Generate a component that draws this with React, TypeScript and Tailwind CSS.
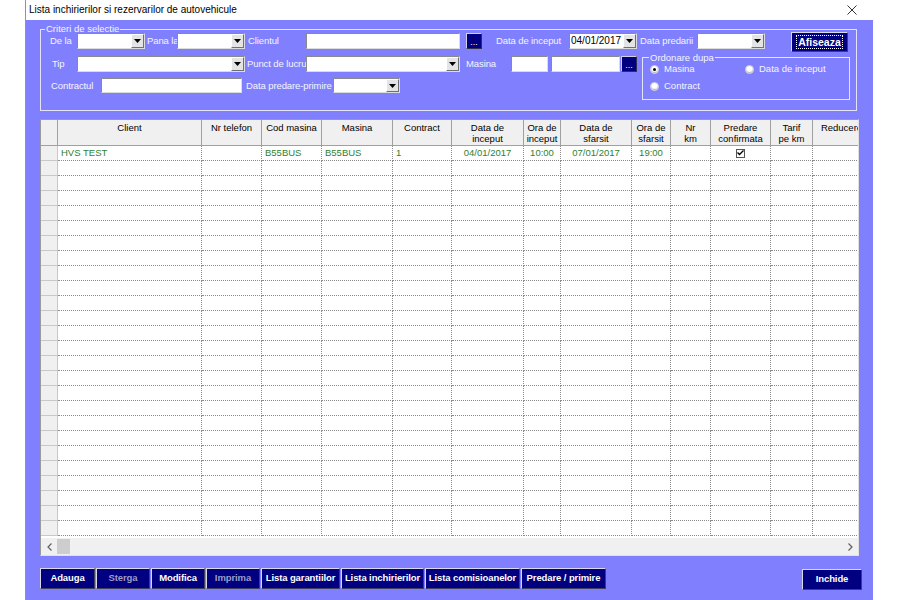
import React from "react";

// column layout of the rental grid
const columns = [
  { key: "client", label: "Client", w: "w-[144px]", align: "text-left" },
  { key: "tel", label: "Nr telefon", w: "w-[60px]", align: "text-left" },
  { key: "cod", label: "Cod masina", w: "w-[60px]", align: "text-left" },
  { key: "masina", label: "Masina", w: "w-[71px]", align: "text-left" },
  { key: "contract", label: "Contract", w: "w-[59px]", align: "text-left" },
  { key: "dataInc", label: "Data de\ninceput", w: "w-[72px]", align: "text-center" },
  { key: "oraInc", label: "Ora de\ninceput", w: "w-[37px]", align: "text-center" },
  { key: "dataSf", label: "Data de\nsfarsit", w: "w-[71px]", align: "text-center" },
  { key: "oraSf", label: "Ora de\nsfarsit", w: "w-[39px]", align: "text-center" },
  { key: "km", label: "Nr\nkm", w: "w-[40px]", align: "text-center" },
  { key: "predare", label: "Predare\nconfirmata", w: "w-[60px]", align: "text-center" },
  { key: "tarif", label: "Tarif\npe km", w: "w-[42px]", align: "text-center" },
  { key: "reducere", label: "Reducere", w: "w-[58px]", align: "text-center" },
];

const firstRow: Record<string, string> = {
  client: "HVS TEST",
  cod: "B55BUS",
  masina: "B55BUS",
  contract: "1",
  dataInc: "04/01/2017",
  oraInc: "10:00",
  dataSf: "07/01/2017",
  oraSf: "19:00",
};

const Label = ({ text, className }: { text: string; className: string }) => (
  <span
    className={`shrink-0 whitespace-nowrap text-[9.5px] leading-[16px] tracking-[-0.1px] text-[#f4f4ff] ${className}`}
  >
    {text}
  </span>
);

const TextBox = ({ className }: { className: string }) => (
  <div
    className={`h-full shrink-0 border border-t-[#8a8a8a] border-l-[#8a8a8a] border-r-[#dcdcdc] border-b-[#dcdcdc] bg-white ${className}`}
  />
);

const Combo = ({ className, value }: { className: string; value?: string }) => (
  <div
    className={`flex h-full shrink-0 border border-t-[#8a8a8a] border-l-[#8a8a8a] border-r-[#dcdcdc] border-b-[#dcdcdc] bg-white ${className}`}
  >
    <span className="flex-1 whitespace-nowrap pl-[1px] text-[10px] leading-[14px] text-black">{value}</span>
    <div className="flex w-[13px] items-center justify-center border border-t-white border-l-white border-r-[#707070] border-b-[#707070] bg-[#e4e4e4]">
      <svg width="7" height="4" viewBox="0 0 7 4">
        <path d="M0 0H7L3.5 4Z" fill="#000" />
      </svg>
    </div>
  </div>
);

const Dots = ({ className }: { className: string }) => (
  <div
    className={`flex h-[16px] w-[16px] shrink-0 items-end justify-center border border-t-[#d0d0e0] border-l-[#d0d0e0] border-r-[#303050] border-b-[#303050] bg-[#000080] pb-[3px] ${className}`}
  >
    <span className="text-[9px] leading-[6px] text-white">...</span>
  </div>
);

const Radio = ({ checked, text }: { checked?: boolean; text: string }) => (
  <div className="flex items-center gap-[5px]">
    <div className="flex h-[9px] w-[9px] items-center justify-center rounded-full border border-[#c8c8d8] bg-white shadow-[inset_0_-1px_1px_#b0b0c0]">
      {checked && <div className="h-[3px] w-[3px] rounded-full bg-black" />}
    </div>
    <span className="whitespace-nowrap text-[9.5px] leading-[12px] text-[#f4f4ff]">{text}</span>
  </div>
);

const NavyButton = ({
  text,
  className,
  disabled,
}: {
  text: string;
  className: string;
  disabled?: boolean;
}) => (
  <div
    className={`flex h-[21px] shrink-0 items-center justify-center whitespace-nowrap border border-t-[#d8d8e8] border-l-[#d8d8e8] border-r-[#404060] border-b-[#404060] bg-[#000080] text-[9.5px] font-bold tracking-[-0.1px] ${
      disabled ? "text-[#9c9cc8]" : "text-white"
    } ${className}`}
  >
    {text}
  </div>
);

export default function App() {
  const rows = Array.from({ length: 26 }, (_, i) => i);

  return (
    <div className="flex h-[600px] w-[900px] overflow-hidden bg-white font-['Liberation_Sans',Arial,sans-serif]">
      <div className="w-[25px] shrink-0" />
      <div className="flex w-[848px] shrink-0 flex-col border-l border-[#5aa7c7]">
        {/* window title */}
        <div className="flex h-[20px] shrink-0 items-center justify-between pl-[3px] pr-[16px]">
          <span className="text-[10px] leading-[12px] text-black">
            Lista inchirierilor si rezervarilor de autovehicule
          </span>
          <svg width="10" height="10" viewBox="0 0 10 10">
            <path d="M0.5 0.5L9.5 9.5M9.5 0.5L0.5 9.5" stroke="#333" strokeWidth="1" />
          </svg>
        </div>

        <div className="flex flex-1 flex-col bg-[#8080ff] pl-[14px]">
          {/* selection criteria */}
          <fieldset className="mt-[4px] h-[87px] w-[817px] border border-[#e4e4ff] p-0">
            <legend className="ml-[4px] whitespace-nowrap px-[1px] text-[9.5px] leading-[10px] text-[#f4f4ff]">
              Criteri de selectie
            </legend>
            <div className="-mt-[1px] flex h-[16px] items-start">
              <Label text="De la" className="w-[36px] pl-[9px]" />
              <Combo className="w-[68px]" />
              <Label text="Pana la" className="w-[32px] pl-[2px]" />
              <Combo className="w-[68px]" />
              <Label text="Clientul" className="w-[61px] pl-[3px]" />
              <TextBox className="w-[154px]" />
              <Dots className="ml-[6px]" />
              <Label text="Data de inceput" className="w-[87px] pl-[14px]" />
              <Combo className="w-[68px]" value="04/01/2017" />
              <Label text="Data predarii" className="w-[60px] pl-[3px]" />
              <Combo className="w-[68px]" />
              <div className="-mt-[1px] ml-[26px] flex h-[20px] w-[57px] shrink-0 items-center justify-center border border-t-[#d8d8e8] border-l-[#d8d8e8] border-r-[#404060] border-b-[#404060] bg-[#000080]">
                <span className="border border-dotted border-white px-[1px] text-[10.5px] font-bold leading-[12px] text-white">
                  Afiseaza
                </span>
              </div>
            </div>

            <div className="mt-[6px] flex items-start">
              <div className="flex w-[601px] shrink-0 flex-col pt-[1px]">
                <div className="flex h-[16px] items-center">
                  <Label text="Tip" className="w-[36px] pl-[11px]" />
                  <Combo className="w-[168px]" />
                  <Label text="Punct de lucru" className="w-[61px] pl-[2px]" />
                  <Combo className="w-[154px]" />
                  <Label text="Masina" className="w-[51px] pl-[6px]" />
                  <TextBox className="w-[37px]" />
                  <TextBox className="ml-[3px] w-[69px]" />
                  <Dots className="ml-[1px]" />
                </div>
                <div className="mt-[6px] flex h-[15px] items-center">
                  <Label text="Contractul" className="w-[60px] pl-[10px]" />
                  <TextBox className="w-[141px]" />
                  <Label text="Data predare-primire" className="w-[91px] pl-[4px]" />
                  <Combo className="w-[67px]" />
                </div>
              </div>

              <fieldset className="-mt-[3px] h-[48px] w-[208px] shrink-0 border border-[#e4e4ff] p-0">
                <legend className="ml-[6px] whitespace-nowrap px-[1px] text-[9.5px] leading-[11px] text-[#f4f4ff]">
                  Ordonare dupa
                </legend>
                <div className="flex flex-col gap-[5px] pl-[7px]">
                  <div className="flex">
                    <div className="w-[95px]">
                      <Radio checked text="Masina" />
                    </div>
                    <Radio text="Data de inceput" />
                  </div>
                  <Radio text="Contract" />
                </div>
              </fieldset>
            </div>
          </fieldset>

          {/* grid */}
          <div className="mt-[8px] flex h-[437px] w-[819px] flex-col overflow-hidden border border-t-[#9a9a9a] border-l-[#9a9a9a] border-r-[#e0e0e0] border-b-[#e0e0e0] bg-white">
            <div className="flex h-[26px] shrink-0 bg-[#f0f0f0]">
              <div className="w-[17px] shrink-0 border-r border-b border-[#a0a0a0]" />
              {columns.map((c) => (
                <div
                  key={c.key}
                  className={`${c.w} shrink-0 overflow-hidden whitespace-pre-line border-r border-b border-[#a0a0a0] pt-[2px] text-center text-[9.5px] leading-[11px] text-black`}
                >
                  {c.label}
                </div>
              ))}
            </div>
            <div className="flex-1 overflow-hidden">
              {rows.map((r) => (
                <div key={r} className="flex h-[15px]">
                  <div className="w-[17px] shrink-0 border-r border-b border-[#c8c8c8] bg-[#f0f0f0]" />
                  {columns.map((c) => (
                    <div
                      key={c.key}
                      className={`${c.w} ${c.align} flex shrink-0 items-center whitespace-nowrap border-r border-b border-dotted border-[#8c8c8c] px-[3px] text-[9.5px] leading-[14px] text-[#2f7f2f] ${
                        c.align === "text-center" ? "justify-center" : "justify-start"
                      }`}
                    >
                      {r === 0 && c.key === "predare" ? (
                        <div className="flex h-[9px] w-[9px] items-center justify-center border border-[#555] bg-white">
                          <svg width="7" height="6" viewBox="0 0 7 6">
                            <path d="M0.5 2.5L2.5 4.5L6.5 0.5" stroke="#000" strokeWidth="1.4" fill="none" />
                          </svg>
                        </div>
                      ) : r === 0 ? (
                        firstRow[c.key] ?? ""
                      ) : (
                        ""
                      )}
                    </div>
                  ))}
                </div>
              ))}
            </div>
            {/* horizontal scrollbar */}
            <div className="flex h-[17px] shrink-0 items-center bg-[#f0f0f0]">
              <div className="flex w-[16px] shrink-0 items-center justify-center">
                <svg width="5" height="8" viewBox="0 0 5 8">
                  <path d="M4.5 0.5L1 4L4.5 7.5" stroke="#606060" strokeWidth="1.2" fill="none" />
                </svg>
              </div>
              <div className="h-[15px] w-[13px] bg-[#cdcdcd]" />
              <div className="flex-1" />
              <div className="flex w-[16px] shrink-0 items-center justify-center">
                <svg width="5" height="8" viewBox="0 0 5 8">
                  <path d="M0.5 0.5L4 4L0.5 7.5" stroke="#606060" strokeWidth="1.2" fill="none" />
                </svg>
              </div>
            </div>
          </div>

          {/* action buttons */}
          <div className="mt-[12px] flex gap-[1px]">
            <NavyButton text="Adauga" className="w-[55px]" />
            <NavyButton text="Sterga" className="w-[54px]" disabled />
            <NavyButton text="Modifica" className="w-[54px]" />
            <NavyButton text="Imprima" className="w-[54px]" disabled />
            <NavyButton text="Lista garantiilor" className="w-[79px]" />
            <NavyButton text="Lista inchirierilor" className="w-[83px]" />
            <NavyButton text="Lista comisioanelor" className="w-[95px]" />
            <NavyButton text="Predare / primire" className="w-[85px]" />
            <NavyButton text="Inchide" className="ml-[195px] mt-[1px] h-[20px] w-[60px]" />
          </div>
        </div>
      </div>
    </div>
  );
}
